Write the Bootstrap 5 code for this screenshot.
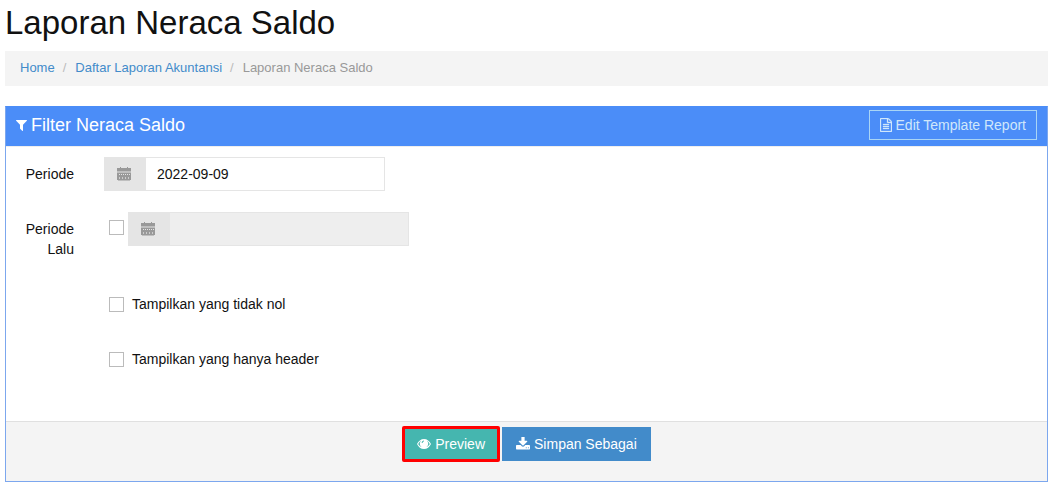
<!DOCTYPE html>
<html lang="id">
<head>
<meta charset="utf-8">
<meta name="viewport" content="width=device-width, initial-scale=1">
<title>Laporan Neraca Saldo</title>
<link href="https://cdn.jsdelivr.net/npm/bootstrap@5.3.0/dist/css/bootstrap.min.css" rel="stylesheet">
<style>
body{font-family:"Liberation Sans",Arial,sans-serif;font-size:14px;line-height:20px;color:#111;padding:0 3px 2px 5px}
.page-title{font-size:33px;line-height:45px;margin-bottom:6px;font-weight:400}
.trail{background:#f4f4f4;font-size:13px;line-height:18px;padding:8px 15px 9px;margin-bottom:20px;--bs-breadcrumb-divider-color:#bbb;--bs-breadcrumb-item-padding-x:8px}
.trail .breadcrumb-item+.breadcrumb-item::before{padding-right:9px}
.trail a{color:#428bca;text-decoration:none}
.trail .active{color:#999}
.panel{border:1px solid #7ca7ee;border-top-color:#4b8df8}
.panel-top{background:#4b8df8;color:#fff;padding:3px 10px 6px;border-bottom:1px solid #eee}
.panel-top h2{font-size:18px;line-height:24px;font-weight:400}
.panel-main{padding:10px 10px 24px}
.btn{--bs-btn-border-radius:0;--bs-btn-font-size:14px;--bs-btn-line-height:20px;border:0;color:#fff}
.btn-edit{border:1px solid #a9d5f5;color:#d0e7fb;padding:4px 10px}
.btn-edit svg{stroke:currentColor;stroke-width:40px}
.btn-preview{background:#45b6af;border:3px solid #f00;border-radius:2px;padding:5px 12px}
.btn-save{background:#428bca;padding:7px 14px}
.field-row{min-height:34px;margin-bottom:21px}
.field-name{width:58px;text-align:right;padding:7px 0;margin-right:30px;flex:none}
.date-box{width:281px}
.date-box .input-group-text{background:#e5e5e5;border:0;border-radius:0;width:43px;height:34px;padding:0 13px;color:#999}
.date-box .form-control{border:1px solid #e5e5e5;border-left:0;border-radius:0;height:34px;font-size:14px;line-height:20px;padding:6px 11px;color:#111}
.date-box .form-control:disabled{background:#eee}
.tick{appearance:none;width:15px;height:15px;border:1px solid #bbb;background:#fff;margin:0;flex:none}
.tick:checked{background:#428bca}
.tick-group{padding-left:5px}
.indent{margin-left:88px}
.panel-foot{background:#f4f4f4;border-top:1px solid #e0e0e0;padding:4px 10px 19px;gap:2px}
svg{fill:currentColor;flex:none}
</style>
</head>
<body>
<svg class="d-none"><symbol id="calendar" viewBox="0 0 14 14"><path d="M3 0h1v1h6V0h1v1h3v3H0V1h3z"/><path opacity=".5" d="M0 4h14v2H0zM1 13h12v1H1z"/><path d="M0 6h14v7H0z"/><path fill="#e5e5e5" d="M2 7h1v1H2zm2 0h1v1H4zm2 0h1v1H6zm2 0h1v1H8zm2 0h1v1h-1zm2 0h1v1h-1z"/><path fill="#ccc" d="M2 10h1v2H2zm3 0h1v2H5zm3 0h1v2H8zm3 0h1v2h-1z"/></symbol></svg>
<h1 class="page-title">Laporan Neraca Saldo</h1>
<nav aria-label="breadcrumb">
<ol class="breadcrumb trail">
<li class="breadcrumb-item"><a href="#">Home</a></li>
<li class="breadcrumb-item"><a href="#">Daftar Laporan Akuntansi</a></li>
<li class="breadcrumb-item active" aria-current="page">Laporan Neraca Saldo</li>
</ol>
</nav>
<form class="panel">
<div class="panel-top d-flex justify-content-between align-items-center">
<h2 class="d-flex align-items-baseline gap-1 mb-0"><svg width="11" height="11" viewBox="190 256 1412 1412"><path d="M1595 295q17 41-14 70l-493 493v742q0 42-39 59-13 5-25 5-27 0-45-19l-256-256q-19-19-19-45v-486l-493-493q-31-29-14-70 17-39 59-39h1280q42 0 59 39z"/></svg>Filter Neraca Saldo</h2>
<button type="button" class="btn btn-edit d-flex align-items-center gap-1"><svg width="12" height="14" viewBox="128 0 1536 1792"><path d="M1596 380q28 28 48 76t20 88v1152q0 40-28 68t-68 28h-1344q-40 0-68-28t-28-68v-1600q0-40 28-68t68-28h896q40 0 88 20t76 48zm-444-244v376h376q-10-29-22-41l-313-313q-12-12-41-22zm384 1528v-1024h-416q-40 0-68-28t-28-68v-416h-768v1536h1280zm-1024-864q0-14 9-23t23-9h704q14 0 23 9t9 23v64q0 14-9 23t-23 9h-704q-14 0-23-9t-9-23v-64zm736 224q14 0 23 9t9 23v64q0 14-9 23t-23 9h-704q-14 0-23-9t-9-23v-64q0-14 9-23t23-9h704zm0 256q14 0 23 9t9 23v64q0 14-9 23t-23 9h-704q-14 0-23-9t-9-23v-64q0-14 9-23t23-9h704z"/></svg>Edit Template Report</button>
</div>
<div class="panel-main">
<div class="field-row d-flex">
<label class="field-name" for="periode">Periode</label>
<div class="input-group date-box"><span class="input-group-text"><svg width="14" height="14"><use href="#calendar"/></svg></span><input class="form-control" id="periode" type="text" value="2022-09-09"></div>
</div>
<div class="field-row d-flex">
<label class="field-name" for="lalu">Periode Lalu</label>
<div class="tick-group d-flex align-items-start"><input class="tick mt-2 me-1" id="lalu" type="checkbox">
<div class="input-group date-box"><span class="input-group-text"><svg width="14" height="14"><use href="#calendar"/></svg></span><input class="form-control" type="text" aria-label="Tanggal periode lalu" disabled></div></div>
</div>
<div class="field-row indent tick-group d-flex align-items-center"><input class="tick me-2" id="nol" type="checkbox"><label for="nol">Tampilkan yang tidak nol</label></div>
<div class="field-row indent tick-group d-flex align-items-center"><input class="tick me-2" id="hdr" type="checkbox"><label for="hdr">Tampilkan yang hanya header</label></div>
</div>
<div class="panel-foot d-flex justify-content-center align-items-center">
<button type="submit" class="btn btn-preview d-flex align-items-center gap-1"><svg width="14" height="14" viewBox="0 0 14 14"><path fill-rule="evenodd" d="M7 2C4 2 1.400 4 0 7c1.400 3 4 5 7 5s5.600-2 7-5C12.600 4 10 2 7 2zM4 3.900A3.800 3.800 0 0 0 4.600 10C3 9.500 1.900 8.400 1.200 7 1.800 5.700 2.800 4.600 4 3.900zM10 3.900c1.200.7 2.200 1.800 2.800 3.100-.7 1.400-1.800 2.500-3.400 3A3.800 3.800 0 0 0 10 3.900zM7 3.600C5.700 3.600 4.700 4.700 4.700 6h.9c0-.8.6-1.500 1.400-1.500z"/></svg>Preview</button>
<button type="button" class="btn btn-save d-flex align-items-center gap-1"><svg width="14" height="14" viewBox="64 64 1664 1664"><path d="M1344 1344q0-26-19-45t-45-19-45 19-19 45 19 45 45 19 45-19 19-45zm256 0q0-26-19-45t-45-19-45 19-19 45 19 45 45 19 45-19 19-45zm128-224v320q0 40-28 68t-68 28h-1472q-40 0-68-28t-28-68v-320q0-40 28-68t68-28h465l135 136q58 56 136 56t136-56l136-136h464q40 0 68 28t28 68zm-325-569q17 41-14 70l-448 448q-18 19-45 19t-45-19l-448-448q-31-29-14-70 17-39 59-39h256v-448q0-26 19-45t45-19h256q26 0 45 19t19 45v448h256q42 0 59 39z"/></svg>Simpan Sebagai</button>
</div>
</form>
<script src="https://cdn.jsdelivr.net/npm/bootstrap@5.3.0/dist/js/bootstrap.bundle.min.js"></script>
</body>
</html>
